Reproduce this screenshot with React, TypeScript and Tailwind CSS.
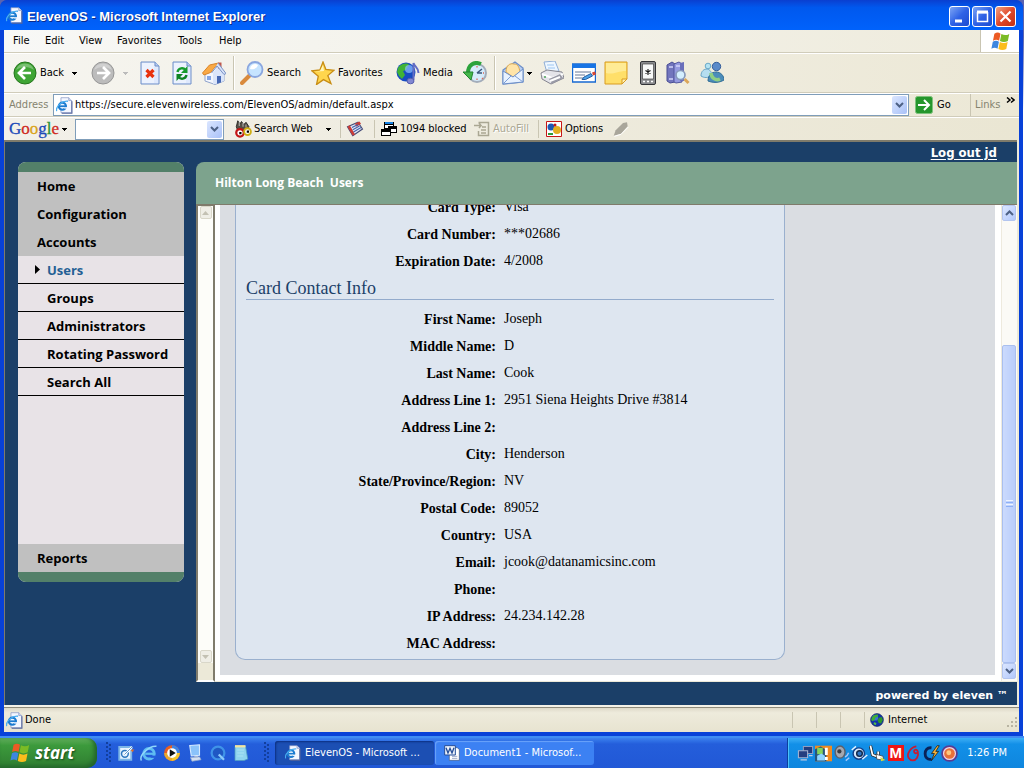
import React, { ReactNode } from "react";

const ui = "font-['DejaVu_Sans_Condensed','DejaVu_Sans',sans-serif] text-[11px] leading-[14px]";
const navFont = "font-['Open_Sans','Noto_Sans',sans-serif] font-bold leading-[20px]";

function Svg({ s = 24, children }: { s?: number; children: ReactNode }) {
  return (
    <svg width={s} height={s} viewBox="0 0 24 24" className="shrink-0" aria-hidden="true">
      {children}
    </svg>
  );
}

function Caret({ color = "#000" }: { color?: string }) {
  return (
    <svg width="5" height="3" viewBox="0 0 5 3" className="shrink-0" aria-hidden="true" shapeRendering="crispEdges">
      <path d="M0 0h5v1h-1v1h-1v1h-1v-1h-1v-1h-1z" fill={color} />
    </svg>
  );
}

function Chevron({ up = false, color = "#4d6185" }: { up?: boolean; color?: string }) {
  return (
    <svg width="9" height="6" viewBox="0 0 9 6" className="shrink-0" aria-hidden="true">
      <path d={up ? "M1 5l3.500-3.500L8 5" : "M1 1l3.500 3.500L8 1"} fill="none" stroke={color} strokeWidth="2" />
    </svg>
  );
}

function Flag({ s = 24 }: { s?: number }) {
  return (
    <Svg s={s}>
      <path d="M5 3c3-1.800 5-1.400 7 0l-1.600 8c-2.200-1.400-4.400-1.400-7 0z" fill="#ec5a24" />
      <path d="M13 3.500c3 1.600 6 1.600 9-.200l-1.600 8c-3 1.600-6 1.600-9 0z" fill="#7bbb25" />
      <path d="M3.200 12.200c2.600-1.400 4.800-1.400 7 0l-1.600 8c-2.200-1.400-4.400-1.400-7 0z" fill="#3d86df" />
      <path d="M11.200 12.600c3 1.600 6 1.600 9 0l-1.600 8c-3 1.600-6 1.600-9 0z" fill="#fbbd1c" />
    </Svg>
  );
}

function IePage({ s = 17 }: { s?: number }) {
  return (
    <Svg s={s}>
      <path d="M7 1h11l4 4v17H7z" fill="#f4f7ff" stroke="#8495c4" />
      <path d="M22.500 6v17H8" fill="none" stroke="#53639a" strokeWidth="1.500" />
      <path d="M18 1v4h4" fill="#cfd9ee" stroke="#8495c4" />
      <circle cx="9" cy="13" r="5" fill="#eef6ff" stroke="#1c7bd0" strokeWidth="3" />
      <path d="M5 13h10" stroke="#1c7bd0" strokeWidth="2.400" />
      <path d="M11.500 15.400h5" stroke="#f4f7ff" strokeWidth="2" />
      <path d="M1 20C-1 14 8 5 17 6" fill="none" stroke="#49aef0" strokeWidth="1.800" />
    </Svg>
  );
}

function IeLogo({ s = 18 }: { s?: number }) {
  return (
    <Svg s={s}>
      <circle cx="12" cy="13" r="7" fill="none" stroke="#5ebcf2" strokeWidth="4" />
      <path d="M7 13h13" stroke="#5ebcf2" strokeWidth="3" />
      <path d="M14 17h8" stroke="#245edb" strokeWidth="3" />
      <path d="M2 22C-2 16 12 2 22 3" fill="none" stroke="#8fd6fb" strokeWidth="2" />
    </Svg>
  );
}

function Globe({ s = 24 }: { s?: number }) {
  return (
    <Svg s={s}>
      <circle cx="12" cy="12" r="11" fill="#1233a8" stroke="#0a1c55" />
      <circle cx="9" cy="8" r="5" fill="#4f8cf0" opacity=".7" />
      <path d="M3 8c3-5 8-6 11-5l-1 4-4 1-1 4-4 2-2-2z" fill="#3fae35" />
      <path d="M15 8l5-1 2 5-3 6-4-1-2-4z" fill="#2f9a2a" />
      <path d="M7 16l4 1-1 4-4-2z" fill="#56c044" />
    </Svg>
  );
}

function Arrow({ left = false, fill, ring }: { left?: boolean; fill: string; ring: string }) {
  return (
    <Svg>
      <circle cx="12" cy="12" r="11" fill={fill} stroke={ring} />
      <path d="M3 9a9.500 9.500 0 0118 0C15 5 9 5 3 9z" fill="#fff" opacity=".3" />
      <path d={left ? "M18 12H7m5-6l-6 6 6 6" : "M6 12h11m-5-6l6 6-6 6"} fill="none" stroke="#fff" strokeWidth="2.700" />
    </Svg>
  );
}

function Page({ children }: { children: ReactNode }) {
  return (
    <Svg>
      <path d="M3 1h14l4 4v18H3z" fill="#dfe9fd" stroke="#6f8fc8" />
      <path d="M4 2h12v20H4z" fill="#fff" opacity=".4" />
      <path d="M17 1v4h4" fill="#b7cbf0" stroke="#6f8fc8" />
      {children}
    </Svg>
  );
}

const Stop = () => (
  <Page>
    <path d="M8.500 9l7 7m0-7l-7 7" stroke="#e8320f" strokeWidth="3.200" />
  </Page>
);
const Refresh = () => (
  <Page>
    <path d="M7.500 11c1-4.500 6-4.500 8-2" fill="none" stroke="#159a2c" strokeWidth="2.400" />
    <path d="M17.500 5v7h-6.500z" fill="#159a2c" />
    <path d="M16.500 14c-1 4.500-6 4.500-8 2" fill="none" stroke="#0d8323" strokeWidth="2.400" />
    <path d="M6.500 20v-7h6.500z" fill="#0d8323" />
  </Page>
);
const Home = () => (
  <Svg>
    <path d="M3 12l9-8 10 8v8l-9 3.500L3 20z" fill="#f3f6fd" stroke="#90a4cc" />
    <path d="M11 23V12l5-7 6 7v8l-9 3z" fill="#dbe5f9" />
    <path d="M16 1.500h3.500v6H16z" fill="#c0584c" />
    <path d="M.500 12L7.500 4l9-2-8 9.500L2 14z" fill="#f9a944" stroke="#d98428" />
    <path d="M16 2l8 10.500-2 1L15 5l-5.500 7" fill="#d9e3f8" stroke="#7a93c6" />
    <path d="M15 15h4v6.500l-4 1.300z" fill="#4668b4" />
    <path d="M5 15h4v4H5z" fill="#84a6e4" />
  </Svg>
);
const Search = () => (
  <Svg>
    <path d="M2 22l8-8" stroke="#d98a3d" strokeWidth="4" strokeLinecap="round" />
    <circle cx="15" cy="8.500" r="7.500" fill="#c6e4ff" stroke="#8aa6df" strokeWidth="1.800" />
    <path d="M10 8a5 5 0 018-4c-1 3-4 5-8 4z" fill="#fff" />
  </Svg>
);
const Star = () => (
  <Svg>
    <path d="M12 1l2.800 7.300 8.200 1-6.200 5.300 3.200 8-7.500-4-7 5 1.800-8.400L.800 9.800l8.200-1z" fill="#ffd64d" stroke="#c88d14" strokeWidth="1.300" />
    <path d="M12 4l1 6-9 .800 5-1z" fill="#fff5ba" />
  </Svg>
);
const Media = () => (
  <Svg>
    <circle cx="10" cy="11" r="9.500" fill="#174cc2" />
    <path d="M2 7c3-5 9-5 11-4l-3 6-3 1 2 4-3 4-3-3-2-4z" fill="#40b335" />
    <circle cx="13" cy="8" r="4" fill="#8ec1ff" opacity=".7" />
    <path d="M17.500 19V2c1 4 5 4 5 10" fill="none" stroke="#636dc4" strokeWidth="2" />
    <ellipse cx="14.500" cy="20" rx="3.500" ry="2.800" fill="#8288d2" stroke="#555eae" />
  </Svg>
);
const History = () => (
  <Svg>
    <circle cx="14" cy="12" r="9" fill="#d6ecfb" stroke="#a3adba" strokeWidth="2" />
    <path d="M14 12l5-4M14 12h5" stroke="#3d587c" strokeWidth="1.500" fill="none" />
    <path d="M14 5v1.500M14 17.500V19M19 17l1 1M21 12h-1" stroke="#e06a58" strokeWidth="1.300" />
    <path d="M18 3C11 0 5 4 5 12" fill="none" stroke="#2ca33b" strokeWidth="4" />
    <path d="M0 11h10l-2 8z" fill="#45b84b" stroke="#238430" />
  </Svg>
);
const Mail = () => (
  <Svg>
    <path d="M2 9L14 1l8 6v14L2 23z" fill="#b7cef4" stroke="#6d8fc8" strokeWidth="1.300" />
    <path d="M5 11c0-7 4-9 8-8 4 0 5 3 6 8l-7 5z" fill="#ffe4a8" stroke="#dca950" />
    <path d="M2 10l10 6 10-8v13L2 23z" fill="#e8f2ff" stroke="#6d8fc8" />
    <path d="M2 23l8-8m12 6l-8-6" stroke="#7b9ed6" />
  </Svg>
);
const Printer = () => (
  <Svg>
    <path d="M4 1l11-1 4 10-12 2z" fill="#eef7ff" stroke="#8faed6" />
    <path d="M7 4h7m-6 3h7" stroke="#9cc6f3" />
    <path d="M1 12l6-3 15 2 2 6-13 6-9-5z" fill="#e4e4e9" stroke="#85858f" />
    <path d="M2 13l10 4 11-4" stroke="#fff" strokeWidth="2" fill="none" />
    <path d="M9 18l11-5 3 4-11 6z" fill="#999aa6" />
    <path d="M10 20l10-4" stroke="#fff" strokeWidth="2" />
    <circle cx="5" cy="16" r="1" fill="#4ca45a" />
  </Svg>
);
const Edit = () => (
  <Svg>
    <path d="M.500 3h23v18H.500z" fill="#fff" stroke="#1769d2" strokeWidth="1.400" />
    <path d="M0 3h24v4H0z" fill="#1874e4" />
    <path d="M3 11h16M3 14h10M3 17h8" stroke="#9aa6bb" strokeWidth="1.300" />
    <path d="M10 18.500l2-2.500 7-3.500 1.500 2.500-7 3.500z" fill="#4aa3ea" stroke="#275da0" />
    <path d="M20 11.500l3-1 1 3-3 1z" fill="#d84732" />
  </Svg>
);
const Note = () => (
  <Svg>
    <path d="M1 1h22v17l-5 5H1z" fill="#ffdf69" stroke="#d89b20" />
    <path d="M2 2h20v8C14 10 9 14 2 12z" fill="#fff0a8" opacity=".7" />
    <path d="M18 23v-5h5z" fill="#fff1b1" stroke="#d89b20" />
  </Svg>
);
const Device = () => (
  <Svg>
    <rect x="4.500" y=".5" width="15" height="23" rx="1.500" fill="#8b8c8f" stroke="#323337" />
    <path d="M6.500 3h11v15h-11z" fill="#f7f8f8" stroke="#444" strokeWidth=".7" />
    <path d="M12 8v6M9.500 9.500l5 3m0-3l-5 3" stroke="#111" strokeWidth="1.100" />
    <path d="M7 20.500h2m2 0h2m2 0h2" stroke="#fff" strokeWidth="1.500" />
  </Svg>
);
const Books = () => (
  <Svg>
    <path d="M1 4l5-3 3 2v18l-5 1-3-2z" fill="#7275bd" stroke="#484c93" />
    <path d="M8 3l5-2 3 2v18l-6 1-2-1z" fill="#959ae0" stroke="#52569d" />
    <path d="M14 2l4-1v19h-4z" fill="#6a6fbb" />
    <path d="M3 6h4M10 5h4M3 18h4" stroke="#d2d4fa" strokeWidth="1.500" />
    <circle cx="14.500" cy="14" r="4.500" fill="#d4efff" stroke="#8899ba" strokeWidth="1.700" />
    <path d="M18.500 18l4 4" stroke="#dba65a" strokeWidth="3" />
  </Svg>
);
const Msn = () => (
  <Svg>
    <circle cx="8" cy="5" r="2.800" fill="#b4e3f2" stroke="#6ba9c8" />
    <path d="M1 15c0-5 3-7 6-7s5 4 5 7c-4 2-8 2-11 0z" fill="#b6def0" stroke="#6aa6c8" />
    <circle cx="16.500" cy="5.500" r="4.200" fill="#5a8ac9" stroke="#365e9b" />
    <path d="M8 20c0-6 4-9 8-9 5 0 8 4 8 8-5 3-11 3-16 1z" fill="#4b8cba" stroke="#2f6c95" />
    <path d="M11 12c0 5 5 8 9 6" fill="none" stroke="#8fce84" strokeWidth="3.500" />
  </Svg>
);

type ToolProps = { w: string; label: string; icon?: ReactNode; text?: string; caret?: string; tight?: boolean };
function Tool({ w, label, icon, text, caret, tight }: ToolProps) {
  return (
    <button type="button" aria-label={label} className={`flex h-8 shrink-0 items-center ${w}`}>
      {icon}
      {text && <span className="ml-[3px]">{text}</span>}
      {caret && (
        <span className={tight ? "ml-[2px]" : "ml-2"}>
          <Caret color={caret} />
        </span>
      )}
    </button>
  );
}

const Sep = () => <div className="mr-[5px] h-[34px] w-[2px] shrink-0 border-r border-l border-r-white border-l-[#c9c5b2]" />;

function WindowButton({ kind }: { kind: "min" | "max" | "close" }) {
  return (
    <button
      type="button"
      aria-label={kind}
      className={`flex size-[21px] items-center justify-center rounded-[3px] border border-white ${
        kind === "close" ? "bg-linear-to-br from-[#f0a080] via-[#e0482a] to-[#c03010]" : "bg-linear-to-br from-[#7fa4f4] via-[#2f62e6] to-[#1d4bd0]"
      }`}
    >
      <svg width="15" height="15" viewBox="0 0 15 15" fill="none" stroke="#fff">
        {kind === "min" && <path d="M3 12h7" strokeWidth="3" />}
        {kind === "max" && <path d="M2.500 3v9.500h10V3M2 3.500h11" strokeWidth="1.500" />}
        {kind === "max" && <path d="M2 3h11" strokeWidth="3" />}
        {kind === "close" && <path d="M2.500 2.500l10 10m0-10l-10 10" strokeWidth="2.200" />}
      </svg>
    </button>
  );
}

function TitleBar() {
  return (
    <header className="flex h-[30px] shrink-0 items-center rounded-t-[7px] bg-linear-to-b from-[#0a3fd0] via-[#0058ee] via-25% to-[#0062fc] pr-[7px] pl-[6px]">
      <IePage />
      <h1 className="ml-1 pt-[4px] font-['Liberation_Sans',sans-serif] text-[13px] leading-[18px] font-bold text-white [text-shadow:1px_1px_#0b2a8a]">
        ElevenOS - Microsoft Internet Explorer
      </h1>
      <div className="ml-auto flex gap-[2px] pt-[3px]">
        <WindowButton kind="min" />
        <WindowButton kind="max" />
        <WindowButton kind="close" />
      </div>
    </header>
  );
}

function MenuBar() {
  return (
    <div className="flex h-[23px] shrink-0 border-b border-[#d0ccba] bg-linear-to-r from-[#f8f8f6] to-[#eeebdc]">
      <nav className="flex items-center pl-[9px]">
        <button type="button" className="w-8 text-left">File</button>
        <button type="button" className="w-[34px] text-left">Edit</button>
        <button type="button" className="w-[38px] text-left">View</button>
        <button type="button" className="w-[61px] text-left">Favorites</button>
        <button type="button" className="w-[41px] text-left">Tools</button>
        <button type="button" className="text-left">Help</button>
      </nav>
      <div className="ml-auto flex w-[39px] items-center justify-center border-l border-[#c9c5b2] bg-white">
        <Flag s={21} />
      </div>
    </div>
  );
}

function ToolBar() {
  return (
    <div className="flex h-10 shrink-0 items-center border-t border-b border-t-white border-b-[#d0ccba] bg-linear-to-r from-[#f6f5f0] to-[#ece8d6] pl-[9px]">
      <Tool w="w-[78px]" label="Back" icon={<Arrow left fill="#3fa535" ring="#24741c" />} text="Back" caret="#000" />
      <Tool w="w-[47px]" label="Forward" icon={<Arrow fill="#bcbcbc" ring="#969696" />} caret="#bbb" />
      <Tool w="w-8" label="Stop" icon={<Stop />} />
      <Tool w="w-8" label="Refresh" icon={<Refresh />} />
      <Tool w="w-[31px]" label="Home" icon={<Home />} />
      <Sep />
      <Tool w="w-[71px]" label="Search" icon={<Search />} text="Search" />
      <Tool w="w-[85px]" label="Favorites" icon={<Star />} text="Favorites" />
      <Tool w="w-[67px]" label="Media" icon={<Media />} text="Media" />
      <Tool w="w-[31px]" label="History" icon={<History />} />
      <Sep />
      <Tool w="w-[39px]" label="Mail" icon={<Mail />} caret="#000" tight />
      <Tool w="w-8" label="Print" icon={<Printer />} />
      <Tool w="w-8" label="Edit" icon={<Edit />} />
      <Tool w="w-8" label="Discuss" icon={<Note />} />
      <Tool w="w-[30px]" label="Device" icon={<Device />} />
      <Tool w="w-[34px]" label="Research" icon={<Books />} />
      <Tool w="w-6" label="Messenger" icon={<Msn />} />
    </div>
  );
}

function DropButton({ label }: { label: string }) {
  return (
    <button type="button" aria-label={label} className="m-px flex w-[15px] shrink-0 items-center justify-center rounded-[2px] bg-linear-to-br from-[#dbe6ff] to-[#a9c1f7]">
      <Chevron />
    </button>
  );
}

function AddressBar() {
  return (
    <div className="flex h-6 shrink-0 items-center border-t border-b border-t-white border-b-[#d0ccba] bg-linear-to-r from-[#f4f3ed] to-[#ece8d6] pl-[5px]">
      <label htmlFor="address" className="w-[44px] shrink-0 text-[#85836f]">Address</label>
      <div className="flex h-[22px] min-w-0 flex-1 border border-[#7f9db9] bg-white">
        <span className="flex w-[21px] shrink-0 items-center pl-[2px]"><IePage /></span>
        <input id="address" className="min-w-0 flex-1 outline-none" defaultValue="https://secure.elevenwireless.com/ElevenOS/admin/default.aspx" />
        <DropButton label="Show addresses" />
      </div>
      <button type="button" className="flex w-[61px] shrink-0 items-center gap-1 pl-[6px]">
        <svg width="18" height="18" viewBox="0 0 18 18">
          <rect x=".5" y=".5" width="17" height="17" rx="2" fill="#25962c" stroke="#7fc27c" />
          <path d="M3 9h11M9 4l5 5-5 5" fill="none" stroke="#fff" strokeWidth="2" />
        </svg>
        Go
      </button>
      <div className="flex h-full w-[49px] shrink-0 items-center border-l border-[#c9c5b2] pl-1 text-[#85836f]">
        Links
        <svg width="9" height="7" viewBox="0 0 9 7" className="mr-1 mb-[9px] ml-auto" fill="none" stroke="#000" strokeWidth="1.500">
          <path d="M1 .500l3 2.500-3 2.500M5 .500l3 2.500-3 2.500" />
        </svg>
      </div>
    </div>
  );
}

function GoogleBar() {
  return (
    <div className="flex h-[23px] shrink-0 items-center border-t border-t-white bg-linear-to-r from-[#f2f0e9] to-[#eae6d3] pl-[5px]">
      <button type="button" className="flex w-[66px] shrink-0 items-center gap-[3px]">
        <span className="font-['Liberation_Serif',serif] text-[17px] leading-5 [-webkit-text-stroke:0.3px]">
          <span className="text-[#1b49b8]">G</span><span className="text-[#cf2a1e]">o</span><span className="text-[#d9a31a]">o</span>
          <span className="text-[#1b49b8]">g</span><span className="text-[#279132]">l</span><span className="text-[#cf2a1e]">e</span>
        </span>
        <Caret />
      </button>
      <div className="flex h-[21px] w-[149px] shrink-0 border border-[#7f9db9] bg-white">
        <input aria-label="Google search" className="min-w-0 flex-1 px-1 outline-none" />
        <DropButton label="Search history" />
      </div>
      <button type="button" className="ml-[10px] flex w-[106px] shrink-0 items-center gap-[2px]">
        <Svg s={18}>
          <path d="M3 9L5 1l3 4 2-3 3 4 3-3 4 6-4 8H6z" fill="#554f45" stroke="#111" />
          <path d="M7 3v5m5-4v5m4-3v4" stroke="#ddd" />
          <circle cx="8" cy="17" r="5" fill="#fff" stroke="#c41414" strokeWidth="3" />
          <circle cx="18" cy="15.500" r="4.500" fill="#fff" stroke="#cfae14" strokeWidth="2.500" />
          <path d="M7 16h3v3H7zM17 14h3v3h-3z" />
        </Svg>
        Search Web
        <span className="mr-[9px] ml-auto"><Caret /></span>
      </button>
      <div className="h-[18px] w-px shrink-0 bg-[#c9c5b2]" />
      <button type="button" aria-label="News" className="ml-[5px] w-[28px] shrink-0">
        <Svg s={18}>
          <path d="M2 9l14-6 6 9-13 9z" fill="#e3e9f5" stroke="#444a77" strokeWidth="1.500" />
          <path d="M2 9l3-2 7 12-3 2zM12 5l6-3 2 3-6 4z" fill="#cc3c36" />
          <path d="M8 10l8-4m-7 7l9-5m-8 8l10-6" stroke="#4563ac" strokeWidth="1.500" />
        </Svg>
      </button>
      <div className="h-[18px] w-px shrink-0 bg-[#c9c5b2]" />
      <button type="button" className="ml-[5px] flex w-[94px] shrink-0 items-center gap-[3px]">
        <svg width="17" height="16" viewBox="0 0 17 16" shapeRendering="crispEdges" fill="#000">
          <path d="M4 1h10v7H4z" /><path d="M5 4h8v3H5z" fill="#fff" /><path d="M5 1h8v2H5z" fill="#1682e4" />
          <path d="M8 5h9v7H8z" /><path d="M9 8h7v3H9z" fill="#fff" />
          <path d="M1 8h10v7H1z" /><path d="M2 11h8v3H2z" fill="#fff" />
        </svg>
        1094 blocked
      </button>
      <button type="button" disabled className="flex w-[64px] shrink-0 items-center gap-[3px] text-[#aaa793] [text-shadow:1px_1px_#fff]">
        <svg width="16" height="16" viewBox="0 0 16 16" fill="none" stroke="#aaa793">
          <path d="M4.500 1.500h10v13h-10V10M0 4.500h7L5 2m2 2.500L5 7M8 6h4M7 9h5M7 12h5" strokeWidth="1.500" />
        </svg>
        AutoFill
      </button>
      <div className="h-[18px] w-px shrink-0 bg-[#c9c5b2]" />
      <button type="button" className="ml-[7px] flex w-[67px] shrink-0 items-center gap-[3px]">
        <svg width="16" height="16" viewBox="0 0 16 16">
          <path d="M.500.500h15v15H.500z" fill="#fff" stroke="#c71717" />
          <circle cx="5" cy="6" r="3.500" fill="#1e58b4" />
          <circle cx="11" cy="9" r="4" fill="#e3af20" />
          <circle cx="9" cy="4" r="1.500" fill="#c71717" />
          <path d="M2 12h5v2H2z" fill="#2c9b3c" />
        </svg>
        Options
      </button>
      <button type="button" aria-label="Highlight" className="shrink-0">
        <Svg s={16}>
          <path d="M1 22l3-8L15 3l6-1 1 6L12 19z" fill="#a9a69b" />
          <path d="M2 23l10-3L23 9" stroke="#fff" strokeWidth="1.500" fill="none" />
        </Svg>
      </button>
    </div>
  );
}

function NavLink({ children }: { children: ReactNode }) {
  return <a href="#" className="flex h-7 items-center bg-[#c0c0c0] pl-[19px]">{children}</a>;
}
function SubLink({ children, active = false }: { children: ReactNode; active?: boolean }) {
  return (
    <a href="#" className={`flex h-7 items-center border-b border-black pl-[17px] ${active ? "text-[#245f94]" : ""}`}>
      <span className="w-[12px]">
        {active && (
          <svg width="5" height="9" viewBox="0 0 5 9"><path d="M0 0l5 4.500L0 9z" fill="#000" /></svg>
        )}
      </span>
      {children}
    </a>
  );
}

function Sidebar() {
  return (
    <nav className={`mt-[20px] w-[166px] shrink-0 self-start overflow-hidden rounded-[8px] bg-[#e8e3e7] text-[13px] text-black ${navFont}`}>
      <div className="h-[10px] bg-[#538069]" />
      <NavLink>Home</NavLink>
      <NavLink>Configuration</NavLink>
      <NavLink>Accounts</NavLink>
      <SubLink active>Users</SubLink>
      <SubLink>Groups</SubLink>
      <SubLink>Administrators</SubLink>
      <SubLink>Rotating Password</SubLink>
      <SubLink>Search All</SubLink>
      <div className="h-[148px]" />
      <NavLink>Reports</NavLink>
      <div className="h-[10px] bg-[#538069]" />
    </nav>
  );
}

const card: [string, string][] = [["Card Type:", "Visa"], ["Card Number:", "***02686"], ["Expiration Date:", "4/2008"]];
const contact: [string, string][] = [
  ["First Name:", "Joseph"],
  ["Middle Name:", "D"],
  ["Last Name:", "Cook"],
  ["Address Line 1:", "2951 Siena Heights Drive #3814"],
  ["Address Line 2:", ""],
  ["City:", "Henderson"],
  ["State/Province/Region:", "NV"],
  ["Postal Code:", "89052"],
  ["Country:", "USA"],
  ["Email:", "jcook@datanamicsinc.com"],
  ["Phone:", ""],
  ["IP Address:", "24.234.142.28"],
  ["MAC Address:", ""],
];

function Fields({ rows }: { rows: [string, string][] }) {
  return (
    <dl className="shrink-0">
      {rows.map(([k, v]) => (
        <div key={k} className="flex h-[27px] gap-2">
          <dt className="w-[250px] pt-[5px] text-right font-bold">{k}</dt>
          <dd className="pt-1">{v}</dd>
        </div>
      ))}
    </dl>
  );
}

function SmallScroll() {
  const btn = "mx-auto flex h-[13px] w-[12px] shrink-0 items-center justify-center rounded-[2px] border border-[#d9d7c9] bg-[#efeee6]";
  return (
    <div className="flex w-[19px] shrink-0 flex-col border-t-2 border-r-2 border-b-2 border-l-2 border-t-[#7f7b6b] border-r-[#7f7b6b] border-b-white border-l-[#7f7b6b] bg-[#fdfdf9]">
      <button type="button" aria-label="Scroll menu up" className={btn}><svg width="7" height="4" viewBox="0 0 7 4"><path d="M0 4l3.500-4L7 4z" fill="#c3c1b3" /></svg></button>
      <div className="flex-1" />
      <button type="button" aria-label="Scroll menu down" className={btn}><svg width="7" height="4" viewBox="0 0 7 4"><path d="M0 0l3.500 4L7 0z" fill="#c3c1b3" /></svg></button>
      <div className="h-[17px] shrink-0 bg-[#ece9d8]" />
    </div>
  );
}

function MainScroll() {
  const btn = "flex h-4 shrink-0 items-center justify-center rounded-[2px] border border-[#b3c5ef] bg-linear-to-br from-[#dce7ff] to-[#b2c8fb]";
  return (
    <div className="flex w-4 shrink-0 flex-col border-l border-[#eeeade] bg-[#fbfaf6] pr-px pb-[2px]">
      <button type="button" aria-label="Scroll up" className={btn}><Chevron up /></button>
      <div className="flex-[124]" />
      <button type="button" aria-label="Scroll position" className="flex flex-[317] flex-col items-center justify-center gap-px rounded-[2px] border border-[#a9bfef] bg-linear-to-r from-[#cbdafd] to-[#b9cdfb]">
        <span className="h-px w-[7px] bg-[#eef4ff]" /><span className="h-px w-[7px] bg-[#8cb0f8]" />
        <span className="h-px w-[7px] bg-[#eef4ff]" /><span className="h-px w-[7px] bg-[#8cb0f8]" />
      </button>
      <button type="button" aria-label="Scroll down" className={btn}><Chevron /></button>
    </div>
  );
}

function Content() {
  return (
    <main className="flex min-h-0 flex-1 border-t-2 border-l border-[#7f7b6b] bg-[#1b3f68] pl-[13px]">
      <Sidebar />
      <div className="ml-3 flex min-w-0 flex-1 flex-col">
        <div className="flex h-5 shrink-0 items-center justify-end pt-px pr-5">
          <a href="#" className="font-['DejaVu_Sans_Condensed',sans-serif] text-[13px] leading-4 font-bold text-white underline underline-offset-2">Log out jd</a>
        </div>
        <h2 className={`flex h-[42px] shrink-0 items-center rounded-tl-[8px] bg-[#7da38d] pl-[19px] text-[12px] whitespace-pre text-white ${navFont}`}>Hilton Long Beach  Users</h2>
        <div className="flex min-h-0 flex-1">
          <SmallScroll />
          <div className="flex min-w-0 flex-1 border-t border-b border-t-[#7f7b6b] border-b-[#ece9d8] bg-white">
            <div className="mr-[6px] mb-[6px] ml-[5px] flex min-w-0 flex-1 overflow-hidden bg-[#dadde2] pb-[15px] pl-[15px]">
              <section className="flex w-[550px] flex-col justify-end overflow-hidden rounded-b-[10px] border-r border-b border-l border-[#9ab0ce] bg-[#dee6f0] px-[10px] pb-[2px] font-['Liberation_Serif',serif] text-[14px] leading-[18px] text-black">
                <Fields rows={card} />
                <h3 className="mb-[6px] shrink-0 border-b border-[#93abcc] pt-[3px] text-[18px] leading-[21px] text-[#1b3f68]">Card Contact Info</h3>
                <Fields rows={contact} />
              </section>
            </div>
            <MainScroll />
          </div>
        </div>
        <footer className="flex h-[23px] shrink-0 items-center justify-end pt-1 pr-[9px] font-['DejaVu_Sans',sans-serif] text-[11px] leading-4 font-bold text-white">powered by eleven ™</footer>
      </div>
    </main>
  );
}

function StatusBar() {
  return (
    <div className="shrink-0 border-t-2 border-[#f4f2e8]">
      <div className="flex h-[25px] items-center border-t border-[#8f8b7b] bg-linear-to-b from-[#dedac9] via-[#eeebdc] via-20% to-[#e7e3d0] pl-[2px]">
        <IePage />
        <span className="ml-[2px]">Done</span>
        <div className="ml-auto flex h-4">
          {[0, 1, 2].map((i) => <div key={i} className="w-6 border-l border-[#c9c5b2]" />)}
          <div className="flex w-[155px] items-center gap-1 border-l border-[#c9c5b2] pl-[5px]">
            <Globe s={14} />Internet
            <svg width="11" height="11" viewBox="0 0 11 11" className="mt-1 mr-px ml-auto" fill="#b8b4a2">
              <path d="M8 0h2v2H8zM4 4h2v2H4zM8 4h2v2H8zM0 8h2v2H0zM4 8h2v2H4zM8 8h2v2H8z" />
            </svg>
          </div>
        </div>
      </div>
    </div>
  );
}

const Grip = () => (
  <svg width="7" height="22" viewBox="0 0 7 22" className="shrink-0" shapeRendering="crispEdges">
    {[0, 4, 8, 12, 16].map((y) => <path key={y} d={`M0 ${y}h2v2h-2zM3 ${y + 2}h2v2h-2z`} fill="#123f9e" />)}
  </svg>
);

const quick: [string, ReactNode][] = [
  ["Desktop", <Svg s={18}><path d="M3 4h16v17H3z" fill="#e8f4ff" stroke="#7db6e6" strokeWidth="2.500" /><circle cx="10.500" cy="13" r="4.500" fill="none" stroke="#2e77be" strokeWidth="2" /><path d="M10 14L20 4" stroke="#fff" strokeWidth="3" /><path d="M10 14L20 4" stroke="#2e77be" /><path d="M18 8l5-1-2 4z" fill="#e0702a" /></Svg>],
  ["Internet Explorer", <IeLogo />],
  ["Media Player", <Svg s={18}><circle cx="12" cy="12" r="10.500" fill="#e85e21" /><path d="M12 1.500A10.500 10.500 0 0122.500 12H12z" fill="#3b84e8" /><path d="M22.500 12A10.500 10.500 0 0112 22.500V12z" fill="#f6c62d" /><path d="M12 22.500A10.500 10.500 0 011.500 12H12z" fill="#e9a92d" /><circle cx="12" cy="12" r="6.500" fill="#fff" /><path d="M9 7l8 5-8 5z" fill="#111" /></Svg>],
  ["Computer", <Svg s={18}><path d="M5 2l13-1v14l-11 1z" fill="#8bc3fa" stroke="#d7eaff" strokeWidth="1.500" /><path d="M6 18l12-1 2 4-12 2z" fill="#d5e0f1" stroke="#8fa7cb" /><path d="M11 16h5v2h-5z" fill="#a2b6d6" /></Svg>],
  ["QuickTime", <Svg s={18}><circle cx="12" cy="12" r="8.500" fill="#1f58c4" stroke="#3f93e8" strokeWidth="3" /><path d="M13 14l7 7" stroke="#8dcbfa" strokeWidth="3" /></Svg>],
  ["Notepad", <Svg s={18}><path d="M4 3h14l3 17-5 2H4z" fill="#8fd4ef" stroke="#509ebd" /><path d="M4 3h14" stroke="#f3e4a0" strokeWidth="3" /><path d="M7 8h9M7 12h9M7 16h8" stroke="#b5e8f4" /></Svg>],
];

const tray: [string, ReactNode][] = [
  ["Network", <Svg s={17}><path d="M9 2h13v10H9z" fill="#223c7c" stroke="#8f9cc0" strokeWidth="1.500" /><path d="M2 8h13v10H2z" fill="#263f80" stroke="#a9b4d0" strokeWidth="1.500" /><path d="M5 21h9M17 15h5" stroke="#c3cbdf" strokeWidth="2" /></Svg>],
  ["Alert", <Svg s={17}><path d="M0 1h24v22H0z" fill="#ef8a20" /><path d="M0 6l8-4 8 5v16H0z" fill="#28557c" /><path d="M3 4h8v9H3z" fill="#82d45c" /><path d="M3 15l6-3 5 3v7H3z" fill="#8ed5ff" /><path d="M16 4v10m0 3v4" stroke="#fff" strokeWidth="4" /></Svg>],
  ["Volume", <Svg s={17}><ellipse cx="10" cy="10" rx="7" ry="8.500" fill="#a5a8b0" stroke="#5d616b" strokeWidth="2" /><circle cx="9" cy="9" r="3" fill="#3a3d45" /><path d="M17 17c3-1 4-3 5-6M18 22l5-4" stroke="#a9c7fa" strokeWidth="2" fill="none" /></Svg>],
  ["Audio", <Svg s={17}><circle cx="11" cy="12" r="8" fill="#d8e8fb" stroke="#123f89" strokeWidth="2" /><circle cx="12" cy="12" r="4" fill="#2e75c4" stroke="#13294a" strokeWidth="2" /><path d="M1 7l6-5M16 20l7-6" stroke="#e7f2ff" strokeWidth="2" /></Svg>],
  ["Tablet", <Svg s={17}><path d="M2 1l3 13 8 3V9" fill="none" stroke="#222" strokeWidth="4.500" /><path d="M2 1l3 13 8 3V9" fill="none" stroke="#fff" strokeWidth="2.500" /><path d="M10 13l10 3v5l-9-1z" fill="#fff" stroke="#333" /><path d="M16 17l7 4-6 2z" fill="#d8da3c" /></Svg>],
  ["M", <span className="flex size-4 items-center justify-center bg-[#ef1515] font-['Liberation_Sans',sans-serif] text-[15px] leading-4 font-bold text-white">M</span>],
  ["Acrobat", <Svg s={17}><path d="M16 2C8 3 2 13 5 18c3 5 9 5 12 0 3-6 1-13-3-11-3 2 0 6 3 4" fill="none" stroke="#c81c33" strokeWidth="2.500" /></Svg>],
  ["Power", <Svg s={17}><path d="M12 4C0 2 0 23 12 20" fill="none" stroke="#0a2258" strokeWidth="4" /><path d="M20 1l-8 11h4l-4 10L22 9h-4l5-8z" fill="#f4b13a" stroke="#111" /></Svg>],
  ["Record", <Svg s={17}><circle cx="12" cy="12" r="10.500" fill="#f0d5e5" stroke="#5a3b92" strokeWidth="2.500" /><circle cx="12" cy="12" r="7.500" fill="#e8703a" /><circle cx="11" cy="11" r="3.500" fill="#ffc77d" /></Svg>],
];

function Taskbar() {
  return (
    <footer className="flex h-8 shrink-0 items-stretch border-t-2 border-[#3f8cf3] bg-linear-to-b from-[#3c81ef] via-[#245edb] via-20% to-[#2158d6] text-white">
      <button type="button" className="flex w-[97px] shrink-0 items-center gap-[4px] rounded-r-[10px] bg-linear-to-b from-[#5eac5a] via-[#3c9a3c] via-25% to-[#2f7d31] pl-[9px] font-['Open_Sans',sans-serif] text-[17px] leading-5 font-bold italic shadow-[inset_-3px_-2px_4px_#22652b] [text-shadow:1px_1px_2px_#174a1b]">
        <Flag s={22} />
        start
      </button>
      <div className="flex shrink-0 items-center pl-[9px]"><Grip /></div>
      <div className="ml-1 flex shrink-0 items-center gap-[5px]">
        {quick.map(([n, icon]) => <button key={n} type="button" aria-label={n}>{icon}</button>)}
      </div>
      <div className="mr-[4px] ml-[14px] flex shrink-0 items-center"><Grip /></div>
      <button type="button" className="my-[3px] flex w-[159px] items-center gap-1 rounded-[3px] bg-[#1c4fb3] pl-[10px] shadow-[inset_1px_1px_2px_#0b2f80]">
        <IePage s={16} /><span className="truncate">ElevenOS - Microsoft ...</span>
      </button>
      <button type="button" className="my-[3px] ml-px flex w-[159px] items-center gap-1 rounded-[3px] bg-[#3c81f3] pl-[9px] shadow-[inset_1px_1px_1px_#6ba3fa]">
        <Svg s={16}>
          <path d="M8 4h12l3 3v16H8z" fill="#fff" stroke="#42577f" /><path d="M12 17h8M12 20h8" stroke="#6a7fae" />
          <path d="M1 1h16v14H1z" fill="#eef3fb" stroke="#244d98" strokeWidth="1.500" /><path d="M3 4l3 8 3-7 3 7 3-8" fill="none" stroke="#244d98" strokeWidth="2" />
        </Svg>
        <span className="truncate">Document1 - Microsof...</span>
      </button>
      <div className="ml-auto flex w-[237px] shrink-0 items-center justify-end border-l border-[#0d3f9e] bg-linear-to-b from-[#3bb0f5] via-[#1290e8] via-20% to-[#0f86de] pr-[17px] shadow-[inset_1px_0_#4bc0fa]">
        <div className="flex gap-px">
          {tray.map(([n, icon]) => <span key={n} className="flex w-[17px] items-center justify-center">{icon}</span>)}
        </div>
        <time className="ml-[9px]">1:26 PM</time>
      </div>
    </footer>
  );
}

export default function App() {
  return (
    <div className={`flex h-screen w-full flex-col overflow-hidden bg-white text-black ${ui}`}>
      <div className="flex min-h-0 flex-1 flex-col bg-linear-to-b from-[#5a63b0] from-5% to-white to-15%">
        <div className="mr-px flex min-h-0 flex-1 flex-col rounded-t-[8px] bg-[#0841d8]">
          <TitleBar />
          <div className="mr-[4px] mb-[4px] ml-[4px] flex min-h-0 flex-1 flex-col bg-[#ece9d8]">
            <MenuBar />
            <ToolBar />
            <AddressBar />
            <GoogleBar />
            <div className="flex min-h-0 flex-1 flex-col pr-[2px]"><Content /></div>
            <StatusBar />
          </div>
        </div>
      </div>
      <Taskbar />
    </div>
  );
}
